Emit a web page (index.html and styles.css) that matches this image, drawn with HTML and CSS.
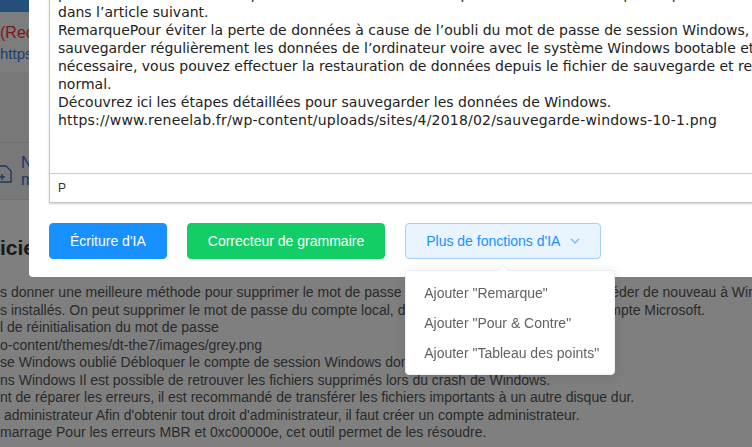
FILE: index.html
```html
<!DOCTYPE html>
<html lang="fr">
<head>
    <meta charset="UTF-8">
    <meta name="viewport" content="width=device-width, initial-scale=1.0">
    <title>Rédaction IA</title>
    <link rel="stylesheet" href="styles.css">
</head>
<body>
    <div class="page">
        <div class="page-top"></div>
        <div class="notice">
            <p class="notice-red">(Recommandé) Renee PassNow</p>
            <p class="notice-link">https://www.reneelab.fr/renee-passnow.html</p>
        </div>
        <div class="gap-zone">
            <div class="feature">
                <svg class="feature-icon" width="14" height="18" viewBox="0 0 14 18">
                    <path d="M-4 1h10l5 5v11H-4z" fill="none" stroke="currentColor" stroke-width="1.4"/>
                    <path d="M2 9v6M-1 12h6" stroke="currentColor" stroke-width="1.4"/>
                </svg>
                <div class="feature-text">
                    <span>Nouveau</span>
                    <span>mot de passe</span>
                </div>
            </div>
        </div>
        <h2 class="section-title">iciels recommandés</h2>
        <div class="summary">
            <div>s donner une meilleure méthode pour supprimer le mot de passe Windows et vous permettre d'accéder de nouveau à Windows.</div>
            <div>s installés. On peut supprimer le mot de passe du compte local, du compte administrateur et du compte Microsoft.</div>
            <div>l de réinitialisation du mot de passe</div>
            <div>o-content/themes/dt-the7/images/grey.png</div>
            <div>se Windows oublié Débloquer le compte de session Windows dont le mot de passe est oublié.</div>
            <div>ns Windows Il est possible de retrouver les fichiers supprimés lors du crash de Windows.</div>
            <div>nt de réparer les erreurs, il est recommandé de transférer les fichiers importants à un autre disque dur.</div>
            <div>&nbsp;administrateur Afin d'obtenir tout droit d'administrateur, il faut créer un compte administrateur.</div>
            <div>marrage Pour les erreurs MBR et 0xc00000e, cet outil permet de les résoudre.</div>
        </div>
    </div>

    <div class="mask"></div>

    <div class="dialog">
        <div class="editor">
            <div class="editor-body">
                Pour réinitialiser le mot de passe, il suffit de démarrer l’ordinateur depuis la clé USB créée<br>
                puis de sélectionner le compte concerné. Vous trouverez plus de détails sur chaque étape<br>
                dans l’article suivant.<br>
                RemarquePour éviter la perte de données à cause de l’oubli du mot de passe de session Windows, il est conseillé de<br>
                sauvegarder régulièrement les données de l’ordinateur voire avec le système Windows bootable et, si c’est<br>
                nécessaire, vous pouvez effectuer la restauration de données depuis le fichier de sauvegarde et revenir à l’état<br>
                normal.<br>
                Découvrez ici les étapes détaillées pour sauvegarder les données de Windows.<br>
                <span class="url">https://www.reneelab.fr/wp-content/uploads/sites/4/2018/02/sauvegarde-windows-10-1.png</span>
            </div>
            <div class="editor-status">p</div>
        </div>

        <div class="actions">
            <button class="btn btn-primary">Écriture d'IA</button>
            <button class="btn btn-success">Correcteur de grammaire</button>
            <div class="more">
                <button class="btn btn-plain">
                    Plus de fonctions d'IA
                    <svg class="chevron" width="10" height="6" viewBox="0 0 10 6">
                        <path d="M1 0.8L5 4.8L9 0.8" fill="none" stroke="currentColor" stroke-width="1.2"/>
                    </svg>
                </button>
                <ul class="menu">
                    <li>Ajouter "Remarque"</li>
                    <li>Ajouter "Pour &amp; Contre"</li>
                    <li>Ajouter "Tableau des points"</li>
                </ul>
            </div>
        </div>
    </div>
</body>
</html>
```

FILE: styles.css
```css
html, body {
    margin: 0;
    height: 100%;
    overflow: hidden;
}
body {
    font-family: "Liberation Sans", Arial, sans-serif;
    background-color: #fff;
    color: #333;
}
p {
    margin: 0;
}

/* page behind the dialog */
.page-top {
    height: 12px;
    background-color: #4a9ff5;
}
.notice {
    height: 60px;
    background-color: #f9fbfe;
    padding-top: 11px;
    box-sizing: border-box;
    white-space: nowrap;
}
.notice-red {
    color: #ff2e2e;
    font-size: 16px;
    line-height: 20px;
}
.notice-link {
    color: #3b7fd6;
    font-size: 15px;
    line-height: 22px;
}
.gap-zone {
    height: 128px;
    background-color: #f0f1f3;
    padding-top: 70px;
    box-sizing: border-box;
}
.feature {
    display: flex;
    align-items: center;
    gap: 7px;
    height: 58px;
    border-top: 1px solid #dcdfe6;
    border-bottom: 1px solid #dcdfe6;
    box-sizing: border-box;
    color: #3a6fb8;
    white-space: nowrap;
}
.feature-icon {
    flex: none;
    margin-top: 6px;
}
.feature-text {
    display: flex;
    flex-direction: column;
    font-size: 16px;
    line-height: 17px;
    color: #2e72c9;
}
.section-title {
    margin: 34px 0 0;
    font-size: 21px;
    line-height: 28px;
    color: #333;
    white-space: nowrap;
}
.summary {
    margin-top: 22px;
    font-size: 14px;
    line-height: 17.5px;
    color: #555;
    white-space: nowrap;
}

.mask {
    position: fixed;
    inset: 0;
    background-color: rgba(0, 0, 0, 0.5);
}

/* dialog */
.dialog {
    position: absolute;
    left: 29px;
    bottom: 170px;
    width: 780px;
    background-color: #fff;
    border-radius: 4px;
    padding: 60px 20px 18px;
}
.editor {
    border: 1px solid #c8c8c8;
    box-shadow: 0 1px 2px rgba(0, 0, 0, 0.2);
    overflow: hidden;
}
.editor-body {
    padding: 8px 8px 44px;
    font-family: "DejaVu Sans", Verdana, sans-serif;
    font-size: 14px;
    line-height: 18px;
    color: #222;
    white-space: nowrap;
}
.editor-body .url {
    letter-spacing: 0.2px;
}
.editor-status {
    border-top: 1px solid #c8c8c8;
    height: 28px;
    line-height: 28px;
    padding: 0 8px;
    font-size: 12px;
    color: #333;
    text-transform: uppercase;
}

.actions {
    display: flex;
    gap: 20px;
    margin-top: 20px;
}
.btn {
    height: 36px;
    padding: 0 20px;
    border: 1px solid transparent;
    border-radius: 4px;
    font-family: "Liberation Sans", Arial, sans-serif;
    font-size: 14px;
    color: #fff;
    cursor: pointer;
}
.btn-primary {
    background-color: #1890ff;
    border-color: #1890ff;
}
.btn-success {
    background-color: #13ce66;
    border-color: #13ce66;
}
.btn-plain {
    display: flex;
    align-items: center;
    gap: 10px;
    background-color: #e8f4ff;
    border-color: #a3d0fd;
    color: #1890ff;
}
.chevron {
    color: #6aaef5;
}

.more {
    position: relative;
}
.menu {
    position: absolute;
    top: 47px;
    left: 0;
    width: 210px;
    box-sizing: border-box;
    margin: 0;
    padding: 7px 0 6px;
    list-style: none;
    background-color: #fff;
    border: 1px solid #ebeef5;
    border-radius: 4px;
    box-shadow: 0 2px 12px rgba(0, 0, 0, 0.1);
}
.menu::before,
.menu::after {
    content: "";
    position: absolute;
    left: 91px;
    border: 6px solid transparent;
    border-top: 0;
}
.menu::before {
    top: -6px;
    border-bottom-color: #ebeef5;
}
.menu::after {
    top: -5px;
    border-bottom-color: #fff;
}
.menu li {
    padding: 0 18px;
    line-height: 30px;
    font-size: 14px;
    color: #606266;
    white-space: nowrap;
}
```
